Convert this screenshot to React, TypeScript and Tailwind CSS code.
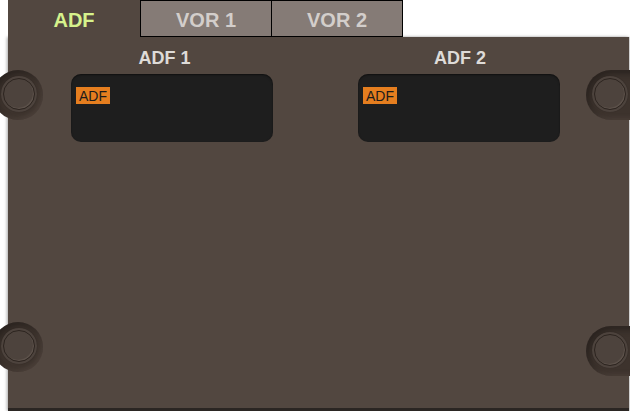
import React from 'react';

const font = { fontFamily: '"Liberation Sans", Arial, sans-serif' };

function Knob({ side, top }: { side: 'left' | 'right'; top: number }) {
  // recessed ring with a knob face inside
  const outer =
    side === 'left'
      ? 'left-[-7px] w-[50px] rounded-full'
      : 'left-[586px] w-[70px] rounded-l-full';
  const face = side === 'left' ? 'left-[1px]' : 'left-[592px]';
  return (
    <>
      <div
        className={`absolute h-[50px] ${outer} bg-[#3d332d] shadow-[inset_4px_4px_6px_rgba(0,0,0,0.3),inset_-2px_-2px_4px_rgba(120,105,95,0.25)]`}
        style={{ top }}
      />
      <div
        className={`absolute ${face} h-[36px] w-[36px] rounded-full bg-[#4d433d] shadow-[0_0_1px_rgba(0,0,0,0.35)] flex items-center justify-center`}
        style={{ top: top + 6 }}
      >
        <div className="h-[32px] w-[32px] rounded-full border border-[#2c241f] shadow-[inset_-1px_-1px_1px_rgba(140,125,115,0.3)]" />
      </div>
    </>
  );
}

function Display({ label, shift }: { label: string; shift: string }) {
  return (
    <div className="flex flex-col w-[202px]">
      <div className={`h-[37px] pt-[6px] flex items-center justify-center text-[18px] font-bold text-[#dedbd8] ${shift}`}>
        {label}
      </div>
      <div className="h-[68px] flex items-start rounded-[10px] bg-[#1e1e1e] px-[5px] pt-[13px] shadow-[inset_0_1px_2px_rgba(0,0,0,0.5)]">
        <span className="flex h-[17px] items-center bg-[#e57e1f] px-[3px] text-[14px] text-[#1b1b1b] leading-none">
          ADF
        </span>
      </div>
    </div>
  );
}

export default function App() {
  return (
    <div className="relative w-[630px] h-[411px] bg-white overflow-hidden" style={font}>
      <div className="flex ml-[8px] h-[37px]">
        <div className="w-[132px] pt-[3px] flex items-center justify-center bg-[#524740] text-[20px] font-bold text-[#d6f28c]">
          ADF
        </div>
        <div className="w-[132px] pt-[2px] flex items-center justify-center bg-[#857b76] border border-black text-[20px] font-bold text-[#d3cecb]">
          VOR 1
        </div>
        <div className="w-[132px] pt-[2px] -ml-px flex items-center justify-center bg-[#857b76] border border-black text-[20px] font-bold text-[#d3cecb]">
          VOR 2
        </div>
      </div>
      <div className="ml-[8px] w-[621px] h-[374px] bg-[#524740] border-b-[3px] border-[#2b2623] shadow-[-1px_0_3px_rgba(0,0,0,0.35),1px_0_1px_rgba(200,200,200,0.6)]">
        <div className="flex pl-[63px] gap-[85px]">
          <Display label="ADF 1" shift="pr-[15px]" />
          <Display label="ADF 2" shift="pl-[2px]" />
        </div>
      </div>
      <Knob side="left" top={70} />
      <Knob side="left" top={322} />
      <Knob side="right" top={70} />
      <Knob side="right" top={326} />
    </div>
  );
}
